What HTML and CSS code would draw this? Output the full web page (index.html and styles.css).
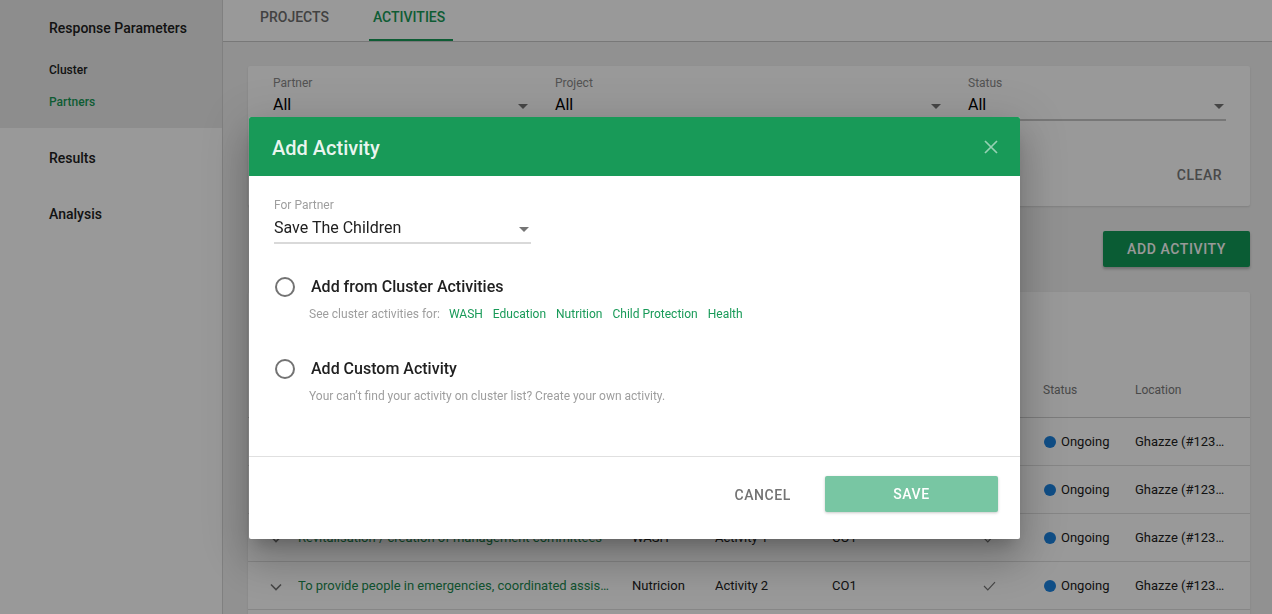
FILE: index.html
```html
<!DOCTYPE html>
<html lang="en">
<head>
<meta charset="utf-8">
<title>Activities</title>
<link rel="stylesheet" href="styles.css">
</head>
<body>
<div class="app">
  <aside class="sidebar">
    <div class="side-group">
      <div class="side-head">Response Parameters</div>
      <ul class="side-sub">
        <li>Cluster</li>
        <li class="active">Partners</li>
      </ul>
    </div>
    <div class="side-item">Results</div>
    <div class="side-item">Analysis</div>
  </aside>

  <main class="main">
    <nav class="tabs">
      <span class="tab">PROJECTS</span>
      <span class="tab tab-active">ACTIVITIES</span>
    </nav>

    <div class="content">
      <section class="card filters">
        <div class="filter-row">
          <div class="field">
            <div class="field-label">Partner</div>
            <div class="field-value">All<span class="caret"></span></div>
          </div>
          <div class="field">
            <div class="field-label">Project</div>
            <div class="field-value">All<span class="caret"></span></div>
          </div>
          <div class="field">
            <div class="field-label">Status</div>
            <div class="field-value">All<span class="caret"></span></div>
          </div>
        </div>
        <div class="filter-actions">
          <button class="btn-flat">CLEAR</button>
        </div>
      </section>

      <div class="toolbar">
        <button class="btn-raised">ADD ACTIVITY</button>
      </div>

      <section class="card table-card">
        <div class="table-meta">1-10 of 12 results to show</div>
        <div class="trow thead">
          <span></span>
          <span>Title</span>
          <span>Cluster</span>
          <span>Activity</span>
          <span>Cluster Objective</span>
          <span>Custom</span>
          <span>Status</span>
          <span>Location</span>
        </div>
        <div class="trow">
          <span class="chev"><svg width="12" height="8" viewBox="0 0 12 8"><path d="M1 1.5l5 5 5-5" fill="none" stroke="#757575" stroke-width="1.6"/></svg></span>
          <span class="title-cell">Construction of latrines in informal settlements</span>
          <span>WASH</span>
          <span>Activity 1</span>
          <span>CO1</span>
          <span class="check"><svg width="13" height="10" viewBox="0 0 13 10"><path d="M1 5l3.8 3.8L12 1.2" fill="none" stroke="#757575" stroke-width="1.2"/></svg></span>
          <span class="status"><i class="dot"></i>Ongoing</span>
          <span class="loc">Ghazze (#1234567)</span>
        </div>
        <div class="trow">
          <span class="chev"><svg width="12" height="8" viewBox="0 0 12 8"><path d="M1 1.5l5 5 5-5" fill="none" stroke="#757575" stroke-width="1.6"/></svg></span>
          <span class="title-cell">Distribution of hygiene kits to affected households</span>
          <span>WASH</span>
          <span>Activity 1</span>
          <span>CO1</span>
          <span class="check"><svg width="13" height="10" viewBox="0 0 13 10"><path d="M1 5l3.8 3.8L12 1.2" fill="none" stroke="#757575" stroke-width="1.2"/></svg></span>
          <span class="status"><i class="dot"></i>Ongoing</span>
          <span class="loc">Ghazze (#1234567)</span>
        </div>
        <div class="trow">
          <span class="chev"><svg width="12" height="8" viewBox="0 0 12 8"><path d="M1 1.5l5 5 5-5" fill="none" stroke="#757575" stroke-width="1.6"/></svg></span>
          <span class="title-cell">Revitalisation / creation of management committees</span>
          <span>WASH</span>
          <span>Activity 1</span>
          <span>CO1</span>
          <span class="check"><svg width="13" height="10" viewBox="0 0 13 10"><path d="M1 5l3.8 3.8L12 1.2" fill="none" stroke="#757575" stroke-width="1.2"/></svg></span>
          <span class="status"><i class="dot"></i>Ongoing</span>
          <span class="loc">Ghazze (#1234567)</span>
        </div>
        <div class="trow">
          <span class="chev"><svg width="12" height="8" viewBox="0 0 12 8"><path d="M1 1.5l5 5 5-5" fill="none" stroke="#757575" stroke-width="1.6"/></svg></span>
          <span class="title-cell">To provide people in emergencies, coordinated assistance and protection</span>
          <span>Nutricion</span>
          <span>Activity 2</span>
          <span>CO1</span>
          <span class="check"><svg width="13" height="10" viewBox="0 0 13 10"><path d="M1 5l3.8 3.8L12 1.2" fill="none" stroke="#757575" stroke-width="1.2"/></svg></span>
          <span class="status"><i class="dot"></i>Ongoing</span>
          <span class="loc">Ghazze (#1234567)</span>
        </div>
      </section>
    </div>
  </main>
</div>

<div class="overlay"></div>

<div class="dialog" role="dialog" aria-label="Add Activity">
  <header class="dialog-head">
    <h2 class="dialog-title">Add Activity</h2>
    <svg class="dialog-close" width="14" height="14" viewBox="0 0 14 14"><path d="M1 1l12 12M13 1L1 13" stroke="currentColor" stroke-width="1.7" fill="none"/></svg>
  </header>
  <div class="dialog-body">
    <div class="dfield">
      <div class="dfield-label">For Partner</div>
      <div class="dfield-value">Save The Children<span class="caret"></span></div>
    </div>

    <div class="option first">
      <span class="radio"></span>
      <div class="option-text">
        <div class="option-title">Add from Cluster Activities</div>
        <div class="option-sub">See cluster activities for:<a class="tag">WASH</a><a class="tag">Education</a><a class="tag">Nutrition</a><a class="tag">Child Protection</a><a class="tag">Health</a></div>
      </div>
    </div>

    <div class="option second">
      <span class="radio"></span>
      <div class="option-text">
        <div class="option-title">Add Custom Activity</div>
        <div class="option-sub">Your can’t find your activity on cluster list? Create your own activity.</div>
      </div>
    </div>
  </div>
  <footer class="dialog-foot">
    <button class="btn-cancel">CANCEL</button>
    <button class="btn-save">SAVE</button>
  </footer>
</div>
</body>
</html>
```

FILE: styles.css
```css
* { box-sizing: border-box; }

html, body {
  margin: 0;
  height: 100%;
}

body {
  font-family: Roboto, "Liberation Sans", sans-serif;
  background: #eeeeee;
  color: #212121;
  overflow: hidden;
}

button {
  font-family: inherit;
  border: 0;
  background: none;
  cursor: pointer;
}

.app {
  display: flex;
  height: 614px;
}

/* Sidebar */
.sidebar {
  width: 223px;
  flex: none;
  background: #ffffff;
  border-right: 1px solid #d6d6d6;
}

.side-group {
  background: #ececec;
  padding-bottom: 10px;
}

.side-head {
  padding: 18px 0 16px 49px;
  font-size: 14px;
  font-weight: 500;
  line-height: 20px;
  color: #212121;
}

.side-sub {
  list-style: none;
  margin: 0;
  padding: 0;
}

.side-sub li {
  padding-left: 49px;
  line-height: 32px;
  font-size: 12px;
  font-weight: 500;
  color: #212121;
}

.side-sub li.active {
  color: #189a58;
}

.side-item {
  padding: 2px 0 0 49px;
  height: 56px;
  line-height: 56px;
  font-size: 14px;
  font-weight: 500;
  color: #212121;
}

/* Main */
.main {
  flex: 1;
  min-width: 0;
  background: #f2f2f2;
}

.tabs {
  height: 42px;
  display: flex;
  padding-left: 25px;
  background: #ffffff;
  border-bottom: 1px solid #c9c9c9;
}

.tab {
  height: 42px;
  margin-bottom: -1px;
  padding: 7px 12px 0;
  line-height: 20px;
  font-size: 14px;
  font-weight: 500;
  color: #6e6e6e;
}

.tab-active {
  margin-left: 28px;
  padding: 7px 8px 0 4px;
  color: #189a58;
  border-bottom: 2px solid #189a58;
  height: 41px;
}

.content {
  padding: 24px 22px 0 25px;
}

.card {
  background: #ffffff;
  border-radius: 2px;
  box-shadow: 0 1px 2px rgba(0, 0, 0, 0.12);
}

/* Filters */
.filters {
  height: 140px;
  padding: 9px 12px 0 25px;
}

.filter-row {
  display: grid;
  grid-template-columns: 257px 388px 258px;
  column-gap: 25px;
}

.field-label {
  font-size: 12px;
  line-height: 16px;
  color: #8a8a8a;
}

.field-value {
  position: relative;
  margin-top: 2px;
  height: 28px;
  font-size: 16px;
  line-height: 24px;
  color: #000;
  border-bottom: 2px solid #c6c6c6;
}

.caret {
  position: absolute;
  right: 2px;
  top: 11px;
  width: 0;
  height: 0;
  border-left: 5px solid transparent;
  border-right: 5px solid transparent;
  border-top: 5px solid #757575;
}

.filter-actions {
  display: flex;
  justify-content: flex-end;
  margin-top: 35px;
}

.btn-flat {
  height: 36px;
  padding: 1px 16px 0;
  font-size: 14px;
  font-weight: 500;
  letter-spacing: 0.5px;
  color: #7a7a7a;
}

.toolbar {
  display: flex;
  justify-content: flex-end;
  margin-top: 25px;
}

.btn-raised {
  height: 36px;
  width: 147px;
  padding-top: 1px;
  border-radius: 2px;
  background: #129a57;
  color: #ffffff;
  font-size: 14px;
  font-weight: 500;
  letter-spacing: 0.6px;
  box-shadow: 0 2px 3px rgba(0, 0, 0, 0.25);
}

/* Table */
.table-card {
  margin-top: 25px;
  height: 340px;
  overflow: hidden;
}

.table-meta {
  height: 70px;
  padding: 30px 0 0 18px;
  font-size: 16px;
  color: #555;
}

.trow {
  display: grid;
  grid-template-columns: 50px 334px 83px 117px 128px 83px 92px 115px;
  align-items: center;
  height: 48px;
  border-bottom: 1px solid #e0e0e0;
  font-size: 13px;
  color: #212121;
}

.trow > span {
  white-space: nowrap;
  overflow: hidden;
  text-overflow: ellipsis;
}

.thead {
  height: 56px;
  padding-top: 1px;
  font-size: 12px;
  color: #7a7a7a;
  border-bottom-color: #cfcfcf;
}

.chev {
  display: flex;
  justify-content: flex-end;
  padding-right: 16px;
}

.chev svg { display: block; margin-top: 2px; }

.title-cell {
  color: #1b8a50;
  padding-right: 22px;
}

.check {
  padding-left: 23px;
}

.check svg { display: block; }

.status {
  display: flex;
  align-items: center;
}

.dot {
  display: inline-block;
  width: 12px;
  height: 12px;
  border-radius: 50%;
  background: #1b82e0;
  margin: 0 5px 0 1px;
}

.loc {
  padding-right: 22px;
}

/* Overlay + dialog */
.overlay {
  position: fixed;
  inset: 0;
  background: rgba(0, 0, 0, 0.4);
}

.dialog {
  position: absolute;
  left: 249px;
  top: 117px;
  width: 771px;
  background: #ffffff;
  border-radius: 2px;
  box-shadow: 0 11px 15px -7px rgba(0, 0, 0, 0.2),
              0 24px 38px 3px rgba(0, 0, 0, 0.14),
              0 9px 46px 8px rgba(0, 0, 0, 0.12);
  overflow: hidden;
}

.dialog-head {
  height: 59px;
  background: #189a58;
  display: flex;
  align-items: center;
  justify-content: space-between;
  padding: 0 22px 0 23px;
}

.dialog-title {
  margin: 2px 0 0;
  font-size: 20px;
  font-weight: 500;
  color: rgba(255, 255, 255, 0.92);
}

.dialog-close {
  display: block;
  color: rgba(255, 255, 255, 0.55);
}

.dialog-body {
  height: 281px;
  padding: 22px 25px 0;
  border-bottom: 1px solid #e0e0e0;
}

.dfield {
  width: 257px;
}

.dfield-label {
  font-size: 12px;
  line-height: 14px;
  color: #9e9e9e;
}

.dfield-value {
  position: relative;
  margin-top: 4px;
  height: 28px;
  padding-bottom: 2px;
  font-size: 16px;
  line-height: 24px;
  color: #212121;
  border-bottom: 2px solid #d9d9d9;
}

.dfield-value .caret {
  top: 11px;
}

.option {
  display: flex;
  gap: 14px;
}

.option.first { margin-top: 32px; }
.option.second { margin-top: 36px; }

.radio {
  flex: none;
  width: 22px;
  height: 22px;
  display: flex;
  align-items: center;
  justify-content: center;
}

.radio::before {
  content: "";
  width: 20px;
  height: 20px;
  border: 2px solid #737373;
  border-radius: 50%;
  box-sizing: border-box;
}

.option-title {
  font-size: 16px;
  font-weight: 500;
  line-height: 20px;
  color: #212121;
  margin: 1px 0 0 1px;
}

.option-sub {
  margin-top: 9px;
  margin-left: -1px;
  font-size: 12px;
  line-height: 16px;
  color: #9e9e9e;
}

.tag {
  margin-left: 10px;
  color: #189a58;
}

.tag:first-child {
  margin-left: 9px;
}

.dialog-foot {
  display: flex;
  justify-content: flex-end;
  align-items: center;
  padding: 19px 22px 27px;
}

.btn-cancel {
  height: 36px;
  padding: 1px 16px 0;
  margin-right: 18px;
  font-size: 14px;
  font-weight: 500;
  letter-spacing: 0.6px;
  color: #737373;
}

.btn-save {
  height: 36px;
  width: 173px;
  padding-top: 1px;
  border-radius: 2px;
  background: #78c6a3;
  color: #ffffff;
  font-size: 14px;
  font-weight: 500;
  letter-spacing: 0.6px;
  box-shadow: 0 1px 3px rgba(0, 0, 0, 0.22);
}
```
